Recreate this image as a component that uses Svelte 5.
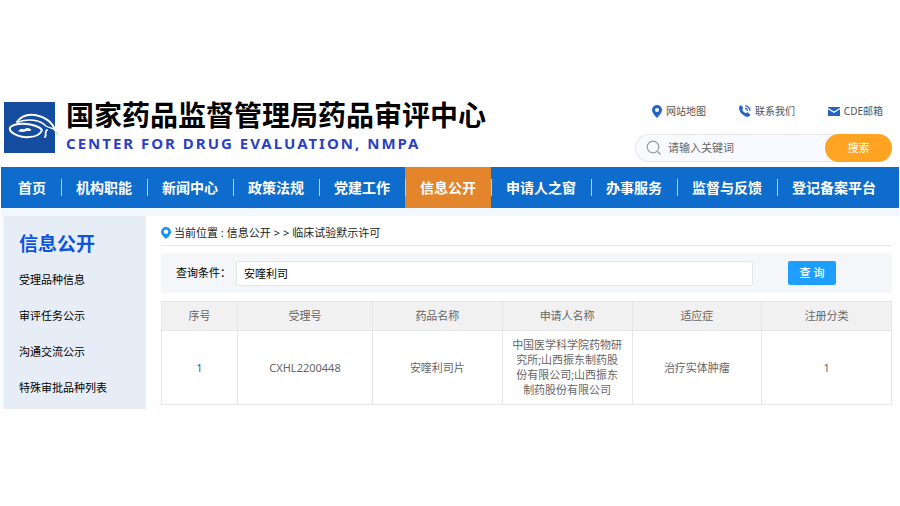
<script>
  const nav = ['首页', '机构职能', '新闻中心', '政策法规', '党建工作', '信息公开', '申请人之窗', '办事服务', '监督与反馈', '登记备案平台'];
  const active = '信息公开';
  const side = ['受理品种信息', '审评任务公示', '沟通交流公示', '特殊审批品种列表'];
  const columns = ['序号', '受理号', '药品名称', '申请人名称', '适应症', '注册分类'];
  const rows = [
    ['1', 'CXHL2200448', '安喹利司片', '中国医学科学院药物研究所;山西振东制药股份有限公司;山西振东制药股份有限公司', '治疗实体肿瘤', '1']
  ];
  let keyword = $state('');
  let query = $state('安喹利司');
</script>

<div class="page">
  <header>
    <svg class="logo" viewBox="0 0 54 51" aria-hidden="true">
      <rect width="51" height="51" fill="#144c9f" />
      <g fill="none" stroke="#fff" stroke-linecap="round" stroke-linejoin="round">
        <path d="M13 20C17 14 24 12 31 13C42 15 49 21 52 30" stroke-width="2" />
        <path d="M52 30L54 33" stroke="#b9c3d6" stroke-width="1" />
        <path d="M14 20C25 16 36 18 42 24C45 26 49 26 51 28" stroke-width="1.5" />
        <path d="M43 28C40 30 43 32 41 35" stroke-width="1.8" />
        <path d="M38 28C34 23 22 21 14 22C8 23 5 25 6 28C8 32 17 36 25 35C32 35 37 32 38 28Z" stroke-width="2" />
        <path d="M15 29C16 27 18 27 20 28C22 26 25 26 27 28C25 29 23 28 21 29C19 30 17 29 15 29" fill="#fff" stroke-width="1" />
      </g>
    </svg>
    <div class="brand">
      <h1>国家药品监督管理局药品审评中心</h1>
      <p>CENTER FOR DRUG EVALUATION, NMPA</p>
    </div>
    <div class="tools">
      <div class="links">
        <a href="#map">
          <svg width="10" height="13" viewBox="0 0 10 13" aria-hidden="true"><path fill="#2464c4" fill-rule="evenodd" d="M5 0a5 5 0 0 0-5 5c0 3.200 5 8 5 8s5-4.800 5-8a5 5 0 0 0-5-5zm0 3a2 2 0 1 1 0 4 2 2 0 0 1 0-4z" /></svg>
          网站地图
        </a>
        <a href="#contact">
          <svg width="12" height="12" viewBox="0 0 12 12" aria-hidden="true"><path fill="#2464c4" d="M2.200.3 4.300 3 3.300 4.800c.6 1.500 1.800 2.600 3.400 3.400l1.700-.9 2.900 2.300c-.3 1.300-1.300 2.200-2.600 2.300C4 11.300.2 7 0 3 0 1.700.9.600 2.200.3z" /><path d="M6 3.200c1.500.2 2.400 1.200 2.600 2.700M6.200.8c2.700.3 4.600 2.300 4.800 5" fill="none" stroke="#2464c4" stroke-width="1.300" /></svg>
          联系我们
        </a>
        <a href="#mail">
          <svg width="12" height="9" viewBox="0 0 12 9" aria-hidden="true"><rect width="12" height="9" fill="#2464c4" /><path d="M0 1.500 6 5.300 12 1.500" fill="none" stroke="#fff" stroke-width="1.100" /></svg>
          CDE邮箱
        </a>
      </div>
      <form class="search" onsubmit={(e) => e.preventDefault()}>
        <svg width="16" height="16" viewBox="0 0 16 16" aria-hidden="true"><circle cx="7" cy="7" r="5.800" fill="none" stroke="#999" stroke-width="1.200" /><path d="m11.500 11.500 3 3" stroke="#999" stroke-width="1.300" /></svg>
        <input type="text" aria-label="请输入关键词" placeholder="请输入关键词" bind:value={keyword} />
        <button>搜索</button>
      </form>
    </div>
  </header>

  <nav>
    {#each nav as item}
      <a href="#nav" class:active={item === active}>{item}</a>
    {/each}
  </nav>

  <div class="body">
    <aside>
      <h2>信息公开</h2>
      <ul>
        {#each side as item}
          <li><a href="#side">{item}</a></li>
        {/each}
      </ul>
    </aside>
    <main>
      <div class="crumbs">
        <svg width="10" height="12" viewBox="0 0 10 12" aria-hidden="true"><path fill="#1593f5" fill-rule="evenodd" d="M5 0a5 5 0 0 0-5 5c0 3 5 7 5 7s5-4 5-7a5 5 0 0 0-5-5zm0 2.500a2.300 2.300 0 1 1 0 4.600 2.300 2.300 0 0 1 0-4.600z" /></svg>
        <span>当前位置 : <a href="#info">信息公开</a></span>
        <span>&gt;</span>
        <span>&gt;</span>
        <a href="#trial">临床试验默示许可</a>
      </div>
      <form class="filter" onsubmit={(e) => e.preventDefault()}>
        <label for="query">查询条件：</label>
        <input id="query" type="text" bind:value={query} />
        <button>查 询</button>
      </form>
      <table>
        <colgroup>
          <col class="index" /><col class="number" /><col /><col /><col /><col />
        </colgroup>
        <thead>
          <tr>{#each columns as c}<th>{c}</th>{/each}</tr>
        </thead>
        <tbody>
          {#each rows as row}
            <tr>{#each row as cell, i}<td>{#if i === 0}<a href="#detail">{cell}</a>{:else}{cell}{/if}</td>{/each}</tr>
          {/each}
        </tbody>
      </table>
    </main>
  </div>
</div>

<style>
  .page, .page * { box-sizing: border-box; }
  .page {
    padding: 100px 1px 0;
    font: 11px/16px "Noto Sans", "Noto Sans CJK SC", sans-serif;
    color: #222;
    background: #fff;
  }
  h1, h2, p, ul { margin: 0; padding: 0; }
  ul { list-style: none; }
  a { color: inherit; text-decoration: none; }
  input, button { font: inherit; color: inherit; border: 0; outline: 0; padding: 0; }
  button { cursor: pointer; color: #fff; }
  svg { flex: none; }

  header { display: flex; height: 67px; padding: 0 7px 0 3px; }
  .logo { width: 54px; height: 51px; margin-top: 2px; }
  .brand { flex: 1; padding-left: 8px; white-space: nowrap; }
  h1 { font-size: 28px; line-height: 30px; font-weight: 700; color: #000; }
  .brand p { font-size: 15px; line-height: 26px; font-weight: 700; letter-spacing: 2px; color: #2b3fc6; }
  .tools { width: 257px; }
  .links { display: flex; justify-content: space-between; padding: 3px 9px 0 17px; font-size: 10px; color: #555; }
  .links a { display: flex; align-items: center; gap: 4px; }
  .search {
    display: flex;
    align-items: center;
    height: 28px;
    margin-top: 15px;
    border-radius: 14px;
    background: #f8faff;
    box-shadow: inset 0 0 0 1px #e3e6ea;
  }
  .search svg { margin: 0 6px 0 11px; }
  .search input { flex: 1; min-width: 0; background: none; }
  .search input::placeholder { color: #666; opacity: 1; }
  .search button { width: 67px; height: 28px; border-radius: 14px; background: #ffa322; }

  nav { display: flex; height: 41px; padding: 0 8px 0 2px; background: #0d6ccc; }
  nav a {
    position: relative;
    flex: auto;
    padding: 0 14px;
    text-align: center;
    font-size: 14px;
    line-height: 41px;
    font-weight: 700;
    color: #fff;
    white-space: nowrap;
  }
  nav a.active { background: #e3852b; }
  nav a + a::before {
    content: "";
    position: absolute;
    left: 0;
    top: 12px;
    height: 17px;
    border-left: 1px solid #b5d3f1;
  }

  .body { display: flex; padding: 8px 0 0 3px; background: #f3f7ff; }
  aside { width: 142px; padding: 16px 15px 13px; background: #e7edf6; }
  h2 { font-size: 19px; line-height: 24px; color: #0b55df; }
  aside ul { display: grid; gap: 20px; padding-top: 16px; }
  aside li { white-space: nowrap; color: #000; }
  main { flex: 1; min-width: 0; padding: 0 7px 0 15px; background: #fff; }
  .crumbs { display: flex; align-items: center; gap: 3px; height: 30px; padding-top: 4px; border-bottom: 1px solid #e8e8e8; }
  .filter { display: flex; height: 40px; margin: 7px 0 8px; padding: 8px 56px 0 15px; background: #f4f6fa; }
  .filter label { width: 60px; line-height: 24px; color: #000; }
  .filter input { flex: 1; min-width: 0; height: 25px; padding: 0 7px 1px; border: 1px solid #e6e6e6; border-radius: 2px; background: #fff; color: #000; }
  .filter button { width: 48px; height: 24px; margin-left: 35px; border-radius: 2px; background: #1e9fff; font-weight: 500; }

  table { width: 100%; table-layout: fixed; border-collapse: collapse; color: #666; background: #fff; }
  .index { width: 76px; }
  .number { width: 135px; }
  th, td { padding: 6px 9px 7px; border: 1px solid #e6e6e6; text-align: center; font-weight: 400; line-height: 15px; }
  th { background: #f1f1f1; }
  td:first-child { color: #33608c; }
</style>
